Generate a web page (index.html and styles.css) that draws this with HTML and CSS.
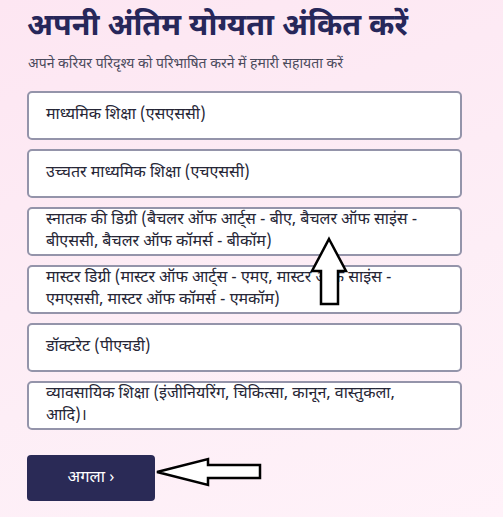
FILE: index.html
```html
<!DOCTYPE html>
<html lang="hi">
<head>
<meta charset="utf-8">
<title>योग्यता</title>
<link rel="stylesheet" href="styles.css">
</head>
<body>
<main class="page">
  <h1 class="title">अपनी अंतिम योग्यता अंकित करें</h1>
  <p class="subtitle">अपने करियर परिदृश्य को परिभाषित करने में हमारी सहायता करें</p>
  <div class="options">
    <div class="option">माध्यमिक शिक्षा (एसएससी)</div>
    <div class="option">उच्चतर माध्यमिक शिक्षा (एचएससी)</div>
    <div class="option">स्नातक की डिग्री (बैचलर ऑफ आर्ट्स - बीए, बैचलर ऑफ साइंस - बीएससी, बैचलर ऑफ कॉमर्स - बीकॉम)</div>
    <div class="option">मास्टर डिग्री (मास्टर ऑफ आर्ट्स - एमए, मास्टर ऑफ साइंस - एमएससी, मास्टर ऑफ कॉमर्स - एमकॉम)</div>
    <div class="option">डॉक्टरेट (पीएचडी)</div>
    <div class="option">व्यावसायिक शिक्षा (इंजीनियरिंग, चिकित्सा, कानून, वास्तुकला, आदि)।</div>
  </div>
  <button class="next">अगला ›</button>
</main>
<svg class="arrow arrow-up" width="40" height="72" viewBox="0 0 40 72">
  <polygon points="20,1 37,33 29,33 29,66 12,66 12,33 3,33" fill="#fff" stroke="#000" stroke-width="2.5" stroke-linejoin="miter"/>
</svg>
<svg class="arrow arrow-left" width="110" height="30" viewBox="0 0 110 30">
  <polygon points="2,14 53,1 53,7 105,7 105,20 53,20 53,27" fill="#fff" stroke="#000" stroke-width="2.5" stroke-linejoin="miter"/>
</svg>
</body>
</html>
```

FILE: styles.css
```css
html, body {
  margin: 0;
  padding: 0;
}
body {
  min-height: 517px;
  background: linear-gradient(160deg, #fde6f2 0%, #fdeef6 60%, #fff2f9 100%);
  font-family: "Noto Sans Devanagari", "Lohit Devanagari", "Noto Sans", "Liberation Sans", sans-serif;
  position: relative;
}
.page {
  padding: 8px 41px 0 27px;
}
.title {
  margin: 0;
  font-size: 30.5px;
  line-height: 40px;
  font-weight: 700;
  color: #27275a;
}
.subtitle {
  margin: 7px 0 0 1px;
  font-size: 14px;
  line-height: 19px;
  color: #4a4a5c;
}
.options {
  margin-top: 17px;
  display: flex;
  flex-direction: column;
  gap: 9px;
}
.option {
  box-sizing: border-box;
  height: 49px;
  background: #fff;
  border: 2px solid #9494aa;
  border-radius: 5px;
  display: flex;
  align-items: center;
  padding: 0 30px 0 17px;
  font-size: 16px;
  line-height: 22px;
  color: #262636;
}
.next {
  margin-top: 25px;
  width: 128px;
  height: 46px;
  border: none;
  border-radius: 4px;
  background: #2a2a56;
  color: #fff;
  font-family: inherit;
  font-size: 16.5px;
  cursor: pointer;
}
.arrow {
  position: absolute;
  overflow: visible;
}
.arrow-up {
  left: 309px;
  top: 238px;
}
.arrow-left {
  left: 155px;
  top: 458px;
}
```
